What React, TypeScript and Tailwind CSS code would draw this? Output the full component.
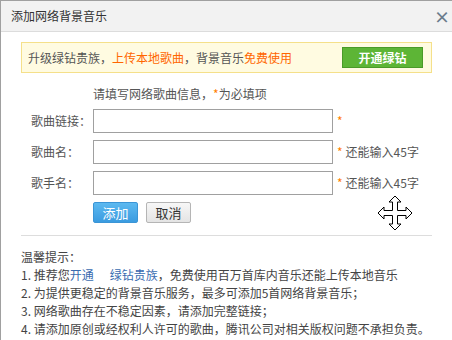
import React from "react";

// ── Cursor overlay (move cursor in the screenshot) ─────────────────

function MoveCursor() {
  return (
    <svg width="36" height="36" viewBox="0 0 36 36" className="absolute left-[376px] top-[194px]">
      <path
        d="M18 1 L24 7 L20.5 7 L20.5 15.5 L29 15.5 L29 12 L35 18 L29 24 L29 20.5 L20.5 20.5 L20.5 29 L24 29 L18 35 L12 29 L15.5 29 L15.5 20.5 L7 20.5 L7 24 L1 18 L7 12 L7 15.5 L15.5 15.5 L15.5 7 L12 7 Z"
        fill="#fff"
        stroke="#000"
        strokeWidth="1"
        strokeLinejoin="miter"
      />
    </svg>
  );
}

function FormRow({ label, hint }: { label: string; hint?: string }) {
  return (
    <div className="flex items-center h-[24px]">
      <div className="w-[62px] text-[#555]">{label}</div>
      <div className="w-[240px] h-[24px] border border-[#a0a0a0] bg-white" />
      <span className="ml-[4px] text-[#ff7e00]">*</span>
      {hint && <span className="ml-[3px] text-[#555]">{hint}</span>}
    </div>
  );
}

export default function App() {
  return (
    <div
      className="relative w-[452px] h-[340px] bg-white border-l border-t border-[#a0a0a0] overflow-hidden text-[12px] leading-[18px]"
      style={{ fontFamily: '"Noto Sans CJK SC", "Liberation Sans", sans-serif' }}
    >
      {/* ── Title bar ─────────────────────────────────────── */}
      <div className="h-[31px] bg-[#f2f2f2] border-b border-[#dcdcdc] flex items-center justify-between pl-[10px] pr-[2px]">
        <span className="text-[12px] text-[#333]">添加网络背景音乐</span>
        <span className="text-[16px] font-bold text-[#6b7b8c] leading-none">×</span>
      </div>

      {/* ── Banner ────────────────────────────────────────── */}
      <div className="mx-[20px] mt-[10px] h-[31px] bg-[#fffbe1] border border-[#f5e08a] flex items-center justify-between pl-[6px] pr-[8px]">
        <span className="text-[#555]">
          升级绿钻贵族，<span className="text-[#ff6600]">上传本地歌曲</span>，背景音乐<span className="text-[#ff6600]">免费使用</span>
        </span>
        <button className="w-[81px] h-[21px] bg-[#5db536] border border-[#4a9a28] text-white font-bold text-[12px] leading-none">
          开通绿钻
        </button>
      </div>

      {/* ── Form ──────────────────────────────────────────── */}
      <div className="pl-[30px] mt-[12px]">
        <div className="pl-[62px] text-[#555]">
          请填写网络歌曲信息，<span className="text-[#ff7e00]">*</span>为必填项
        </div>
        <div className="mt-[6px] flex flex-col gap-[7px]">
          <FormRow label="歌曲链接：" />
          <FormRow label="歌曲名：" hint="还能输入45字" />
          <FormRow label="歌手名：" hint="还能输入45字" />
        </div>
        <div className="pl-[62px] mt-[7px] flex gap-[8px]">
          <button className="w-[45px] h-[21px] rounded-[2px] bg-gradient-to-b from-[#5cb9f0] to-[#3a9be0] border border-[#3b95d6] text-white text-[13px] leading-none">
            添加
          </button>
          <button className="w-[45px] h-[21px] rounded-[2px] bg-gradient-to-b from-[#f7f7f7] to-[#e4e4e4] border border-[#b5b5b5] text-[#333] text-[13px] leading-none">
            取消
          </button>
        </div>
      </div>

      <div className="mx-[20px] mt-[12px] border-t border-[#dddddd]" />

      {/* ── Tips ──────────────────────────────────────────── */}
      <div className="pl-[20px] mt-[12px] text-[#444]">
        <div>温馨提示：</div>
        <div>
          1. 推荐您<span className="text-[#3a6cb0]">开通</span>
          <span className="inline-block w-[16px]" />
          <span className="text-[#3a6cb0]">绿钻贵族</span>，免费使用百万首库内音乐还能上传本地音乐
        </div>
        <div>2. 为提供更稳定的背景音乐服务，最多可添加5首网络背景音乐；</div>
        <div>3. 网络歌曲存在不稳定因素，请添加完整链接；</div>
        <div>4. 请添加原创或经权利人许可的歌曲，腾讯公司对相关版权问题不承担负责。</div>
      </div>

      <MoveCursor />
    </div>
  );
}
